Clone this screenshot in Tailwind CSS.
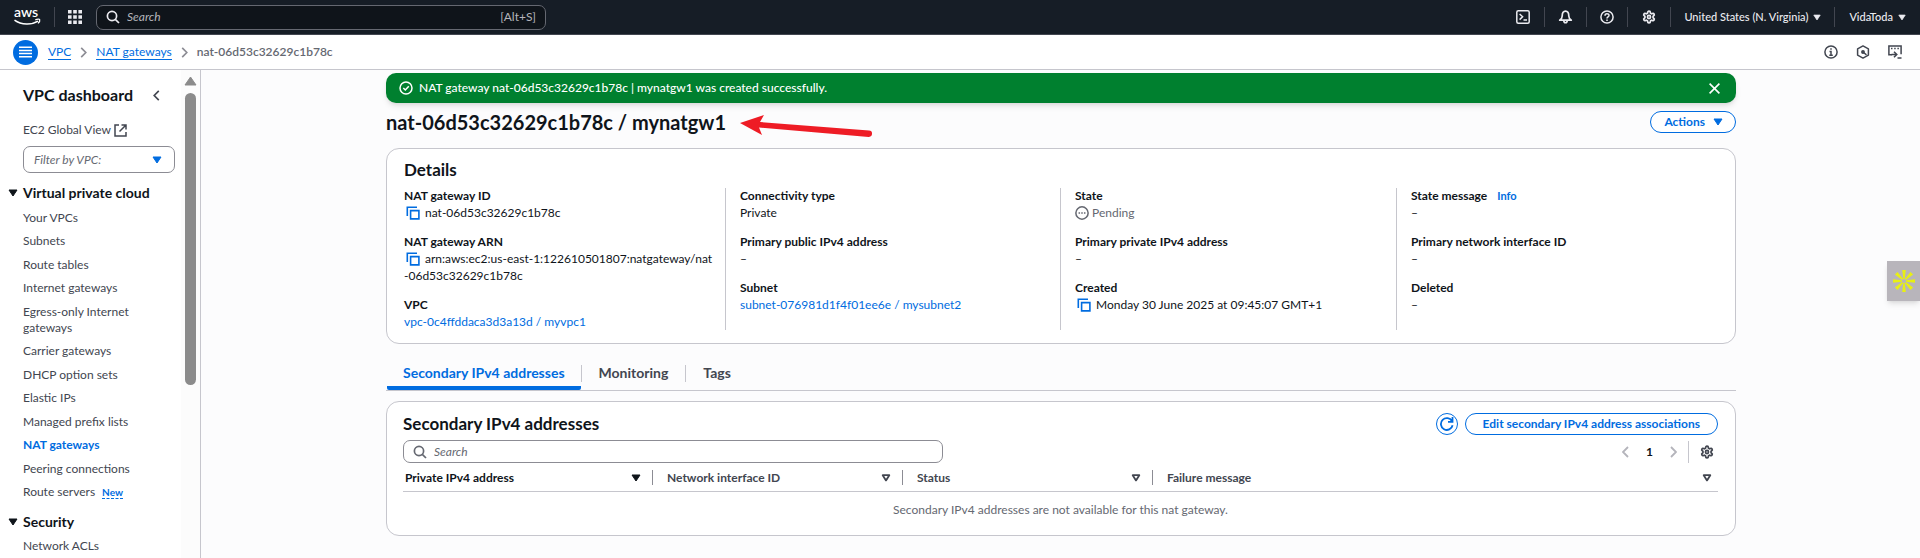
<!DOCTYPE html>
<html lang="en">
<head>
<meta charset="utf-8">
<meta name="viewport" content="width=device-width, initial-scale=1">
<title>NAT gateways | VPC Console</title>
<script src="https://cdn.jsdelivr.net/npm/@tailwindcss/browser@4"></script>
</head>
<body class="flex h-screen flex-col overflow-hidden bg-[#fcfcfd] font-['Lato','Noto_Sans',sans-serif] text-[12px] leading-4 text-[#0f141a]">

<svg class="hidden" aria-hidden="true">
  <symbol id="gear" viewBox="0 0 24 24"><g fill="none" stroke="currentColor" stroke-width="3"><path d="M12.22 2h-.44a2 2 0 0 0-2 2v.18a2 2 0 0 1-1 1.73l-.43.25a2 2 0 0 1-2 0l-.15-.08a2 2 0 0 0-2.73.73l-.22.38a2 2 0 0 0 .73 2.73l.15.1a2 2 0 0 1 1 1.72v.51a2 2 0 0 1-1 1.74l-.15.09a2 2 0 0 0-.73 2.73l.22.38a2 2 0 0 0 2.73.73l.15-.08a2 2 0 0 1 2 0l.43.25a2 2 0 0 1 1 1.73V20a2 2 0 0 0 2 2h.44a2 2 0 0 0 2-2v-.18a2 2 0 0 1 1-1.73l.43-.25a2 2 0 0 1 2 0l.15.08a2 2 0 0 0 2.73-.73l.22-.39a2 2 0 0 0-.73-2.73l-.15-.08a2 2 0 0 1-1-1.74v-.5a2 2 0 0 1 1-1.74l.15-.09a2 2 0 0 0 .73-2.73l-.22-.38a2 2 0 0 0-2.73-.73l-.15.08a2 2 0 0 1-2 0l-.43-.25a2 2 0 0 1-1-1.73V4a2 2 0 0 0-2-2z"/><circle cx="12" cy="12" r="2.6"/></g></symbol>
  <symbol id="search" viewBox="0 0 14 14"><g fill="none" stroke="currentColor" stroke-width="1.7"><circle cx="6" cy="6" r="4.6"/><path d="M9.3 9.3 13 13"/></g></symbol>
  <symbol id="caret" viewBox="0 0 10 8"><path fill="currentColor" stroke="currentColor" stroke-linejoin="round" d="M1 1h8L5 7z"/></symbol>
  <symbol id="caret-open" viewBox="0 0 10 8"><path fill="none" stroke="currentColor" stroke-width="1.8" stroke-linejoin="round" d="M1.7 1.2h6.6L5 6.4z"/></symbol>
  <symbol id="chevron-right" viewBox="0 0 7 12"><path fill="none" stroke="currentColor" stroke-width="1.8" d="m1 1 5 5-5 5"/></symbol>
  <symbol id="chevron-left" viewBox="0 0 7 12"><path fill="none" stroke="currentColor" stroke-width="1.8" d="M6 1 1 6l5 5"/></symbol>
  <symbol id="copy" viewBox="0 0 14 14"><path fill="none" stroke="currentColor" stroke-width="1.6" d="M1.3 10V1.3H11M4.600 4.600h8.300v8.300H4.600z"/></symbol>
</svg>

<header class="flex h-[35px] shrink-0 items-center border-b border-[#424650] bg-[#161d26] text-[#ebebf0]">
  <a href="#" aria-label="AWS home" class="ml-[13px] block">
    <svg class="h-[20px] w-[28px] overflow-visible" viewBox="0 0 28 20"><text x="13" y="10" text-anchor="middle" font-size="14" font-weight="600" fill="#fff">aws</text><path d="M1.500 13.200c7 5.200 17.500 4.800 23.500 1" fill="none" stroke="#fff" stroke-width="1.500"/><path d="M22.300 12.800c2-.8 4.200-.8 4.400-.2s-.5 2.600-1.700 3.800" fill="none" stroke="#fff" stroke-width="1.300"/></svg>
  </a>
  <span class="ml-[13px] h-[20px] w-px bg-[#424650]"></span>
  <button type="button" aria-label="Services" class="ml-[13px]">
    <svg class="size-[14px]" viewBox="0 0 14 14" fill="currentColor"><path d="M0 0h3.600v3.600H0zM5.200 0h3.600v3.600H5.200zM10.400 0H14v3.600h-3.600zM0 5.200h3.600v3.600H0zM5.200 5.200h3.600v3.600H5.200zM10.400 5.200H14v3.600h-3.600zM0 10.400h3.600V14H0zM5.200 10.400h3.600V14H5.200zM10.400 10.400H14V14h-3.600z"/></svg>
  </button>
  <label class="ml-[14px] flex h-[25px] w-[450px] items-center rounded-[7px] border border-[#656871] bg-[#0f141a] px-[9px]">
    <svg class="size-[14px] shrink-0"><use href="#search"/></svg>
    <input type="search" aria-label="Search" placeholder="Search" class="ml-[7px] min-w-0 flex-1 bg-transparent text-[12px] italic outline-none placeholder:text-[#b4b4bb]">
    <span class="text-[12px] text-[#b4b4bb]">[Alt+S]</span>
  </label>
  <div class="ml-auto flex items-center">
    <button type="button" aria-label="CloudShell" class="mr-[14px]"><svg class="size-[14px]" viewBox="0 0 14 14" fill="none" stroke="currentColor" stroke-width="1.500"><rect x=".8" y=".8" width="12.400" height="12.400" rx="1.500"/><path d="m3.600 4 3 2.800-3 2.800M7.500 10H11"/></svg></button>
    <span class="h-[20px] w-px bg-[#424650]"></span>
    <button type="button" aria-label="Notifications" class="mx-[13px]"><svg class="h-[14px] w-[15px]" viewBox="0 0 15 14" fill="none" stroke="currentColor" stroke-width="1.700"><path d="M4.200 6c0-3.200 1.300-4.900 3.300-4.900S10.800 2.800 10.800 6c0 2.200 1.200 3.300 2.500 4.200H1.700C3 9.300 4.200 8.200 4.200 6z" stroke-linejoin="round"/><path d="M5.800 10.500c0 3 3.400 3 3.400 0"/></svg></button>
    <span class="h-[20px] w-px bg-[#424650]"></span>
    <button type="button" aria-label="Help" class="mx-[13px]"><svg class="size-[14px]" viewBox="0 0 14 14" fill="none" stroke="currentColor" stroke-width="1.500"><circle cx="7" cy="7" r="6.100"/><path d="M5 5.700C5 3 9 3 9 5.500 9 7 7 6.900 7 8.600M7 9.500v1.500"/></svg></button>
    <span class="h-[20px] w-px bg-[#424650]"></span>
    <button type="button" aria-label="Settings" class="mx-[14px]"><svg class="size-[14px]"><use href="#gear"/></svg></button>
    <span class="h-[20px] w-px bg-[#424650]"></span>
    <button type="button" class="mx-[13px] flex items-center gap-[5px] text-[11px] font-medium">United States (N. Virginia)<svg class="h-[7px] w-[8px]"><use href="#caret"/></svg></button>
    <span class="h-[20px] w-px bg-[#424650]"></span>
    <button type="button" class="mr-[14px] ml-[14px] flex items-center gap-[5px] text-[11px] font-medium">VidaToda<svg class="h-[7px] w-[8px]"><use href="#caret"/></svg></button>
  </div>
</header>

<div class="flex h-[35px] shrink-0 items-center border-b border-[#c6c6cd] bg-white">
  <button type="button" aria-label="Open navigation" class="ml-[13px] flex size-[25px] items-center justify-center rounded-full bg-[#006ce0] text-white">
    <svg class="h-[12px] w-[13px]" viewBox="0 0 13 12" stroke="currentColor" stroke-width="1.500"><path d="M0 1.200h13M0 4.400h13M0 7.600h13M0 10.800h13"/></svg>
  </button>
  <nav aria-label="Breadcrumb" class="ml-[10px]">
    <ol class="flex items-center gap-[9px] text-[12px]">
      <li><a href="#" class="border-b border-[#006ce0] text-[#006ce0]">VPC</a></li>
      <li aria-hidden="true"><svg class="h-[11px] w-[7px] text-[#8c8c94]"><use href="#chevron-right"/></svg></li>
      <li><a href="#" class="border-b border-[#006ce0] text-[#006ce0]">NAT gateways</a></li>
      <li aria-hidden="true"><svg class="h-[11px] w-[7px] text-[#8c8c94]"><use href="#chevron-right"/></svg></li>
      <li class="font-semibold text-[#656871]" aria-current="page">nat-06d53c32629c1b78c</li>
    </ol>
  </nav>
  <div class="mr-[18px] ml-auto flex items-center gap-[18px] text-[#424650]">
    <button type="button" aria-label="Info"><svg class="size-[14px]" viewBox="0 0 14 14" fill="none" stroke="currentColor" stroke-width="1.500"><circle cx="7" cy="7" r="6.100"/><path d="M7 3.300v1.500M5.500 6.600H7v3.800M5.300 10.200h3.500"/></svg></button>
    <button type="button" aria-label="Diagnostics"><svg class="size-[14px]" viewBox="0 0 14 14" fill="none" stroke="currentColor" stroke-width="1.500"><path d="m7 .9 5.400 3v6.200L7 13.100l-5.400-3V3.900z" stroke-linejoin="round"/><circle cx="7" cy="7" r="1.200" fill="currentColor"/><path d="m7.500 7.500 3 2.300"/></svg></button>
    <button type="button" aria-label="Console actions"><svg class="size-[14px]" viewBox="0 0 14 14" fill="none" stroke="currentColor" stroke-width="1.500"><path d="M4 9.800H.9V1h12.200v8.300"/><path d="M3 3.600h1.500M6.200 3.600h1.500M9.400 3.600h1.500M3.500 9.500h5M6 6.700l2.800 2.800L6 12.300M9.500 13h4"/></svg></button>
  </div>
</div>

<div class="flex min-h-0 flex-1">
  <aside class="flex w-[201px] shrink-0 border-r border-[#c6c6cd] bg-white">
    <div class="flex min-w-0 flex-1 flex-col overflow-hidden text-[#424650]">
      <div class="mt-[13px] flex items-center justify-between pr-[21px] pl-[23px]">
        <h2 class="text-[16px] leading-6 font-bold text-[#0f141a]">VPC dashboard</h2>
        <button type="button" aria-label="Close navigation"><svg class="h-[11px] w-[7px]"><use href="#chevron-left"/></svg></button>
      </div>
      <a href="#" class="mt-[15px] ml-[23px] flex items-center gap-[3px]">EC2 Global View
        <svg class="size-[13px]" viewBox="0 0 13 13" fill="none" stroke="currentColor" stroke-width="1.500"><path d="M5 1H1v11h11V8M7.500 1H12v4.500M12 1 5.500 7.500"/></svg>
      </a>
      <button type="button" class="mt-2 mr-[6px] ml-[23px] flex h-[27px] shrink-0 items-center justify-between rounded-[7px] border border-[#8c8c94] pr-[12px] pl-[10px] text-[12px] text-[#656871] italic">Filter by VPC:
        <svg class="h-[8px] w-[10px] text-[#006ce0]"><use href="#caret"/></svg>
      </button>
      <h3 class="mt-[10px] ml-2 flex items-center gap-[5px] text-[14px] leading-5 font-bold text-[#0f141a]"><svg class="h-[8px] w-[10px] shrink-0"><use href="#caret"/></svg>Virtual private cloud</h3>
      <ul class="mt-[7px] ml-[23px] flex h-[290px] shrink-0 flex-col justify-between">
        <li><a href="#">Your VPCs</a></li>
        <li><a href="#">Subnets</a></li>
        <li><a href="#">Route tables</a></li>
        <li><a href="#">Internet gateways</a></li>
        <li><a href="#">Egress-only Internet<br>gateways</a></li>
        <li><a href="#">Carrier gateways</a></li>
        <li><a href="#">DHCP option sets</a></li>
        <li><a href="#">Elastic IPs</a></li>
        <li><a href="#">Managed prefix lists</a></li>
        <li><a href="#" aria-current="page" class="font-bold text-[#006ce0]">NAT gateways</a></li>
        <li><a href="#">Peering connections</a></li>
        <li><a href="#">Route servers</a><a href="#" class="ml-[7px] border-b border-dashed border-[#006ce0] text-[10px] font-bold text-[#006ce0]">New</a></li>
      </ul>
      <h3 class="mt-[12px] ml-2 flex items-center gap-[5px] text-[14px] leading-5 font-bold text-[#0f141a]"><svg class="h-[8px] w-[10px] shrink-0"><use href="#caret"/></svg>Security</h3>
      <ul class="mt-[6px] ml-[23px]"><li><a href="#">Network ACLs</a></li></ul>
    </div>
    <div class="flex w-[19px] flex-col items-center bg-[#fcfcfc] pt-[6px]" aria-hidden="true">
      <svg class="h-[10px] w-[13px] text-[#8b8b8b]" viewBox="0 0 13 10"><path d="M6.500 1 12 9H1z" fill="currentColor" stroke="currentColor" stroke-linejoin="round"/></svg>
      <div class="mt-[7px] h-[292px] w-[11px] rounded-full bg-[#8b8b8b]"></div>
    </div>
  </aside>

  <main class="relative min-w-0 flex-1 pr-[184px] pl-[185px]">
    <div role="status" class="mt-[3px] flex h-[30px] items-center rounded-[10px] bg-[#00802f] pr-[16px] pl-[13px] text-white shadow-md">
      <svg class="size-[14px]" viewBox="0 0 14 14" fill="none" stroke="currentColor" stroke-width="1.500"><circle cx="7" cy="7" r="6"/><path d="m4.300 7 2 2 3.500-3.700"/></svg>
      <p class="ml-[6px] font-medium">NAT gateway nat-06d53c32629c1b78c | mynatgw1 was created successfully.</p>
      <button type="button" aria-label="Dismiss" class="ml-auto"><svg class="size-[11px]" viewBox="0 0 11 11" stroke="currentColor" stroke-width="1.600"><path d="m.6.6 9.800 9.800M10.400.6.600 10.400"/></svg></button>
    </div>

    <div class="mt-2 flex h-[22px] items-center justify-between">
      <h1 class="text-[20px] leading-[22px] font-bold">nat-06d53c32629c1b78c / mynatgw1</h1>
      <button type="button" class="flex h-[22px] items-center gap-2 rounded-full border border-[#006ce0] bg-white pr-[12px] pl-[13px] font-bold text-[#006ce0]">Actions<svg class="h-[8px] w-[10px]"><use href="#caret"/></svg></button>
    </div>
    <svg class="absolute top-[43px] left-[538px] h-[26px] w-[134px] text-[#ee1c25]" viewBox="0 0 134 26" fill="currentColor" aria-hidden="true"><path d="M1 10 25 2l-4 7 109 8.500a3.200 3.200 0 0 1-.3 6.400L20 14.500l3 7.500z"/></svg>

    <section class="mt-[15px] rounded-[13px] border border-[#c6c6cd] bg-white px-[17px] pt-[9px] pb-[13px]">
      <h2 class="text-[17px] leading-6 font-bold">Details</h2>
      <div class="mt-[6px] grid grid-cols-[321fr_335fr_336fr_322fr] leading-[17px]">
        <dl class="flex flex-col gap-[13px]">
          <div><dt class="leading-4 font-bold">NAT gateway ID</dt><dd class="flex items-center"><button type="button" aria-label="Copy NAT gateway ID" class="mr-[5px] ml-[2px] text-[#006ce0]"><svg class="size-[14px]"><use href="#copy"/></svg></button>nat-06d53c32629c1b78c</dd></div>
          <div><dt class="leading-4 font-bold">NAT gateway ARN</dt><dd><div class="flex items-center"><button type="button" aria-label="Copy ARN" class="mr-[5px] ml-[2px] text-[#006ce0]"><svg class="size-[14px]"><use href="#copy"/></svg></button>arn:aws:ec2:us-east-1:122610501807:natgateway/nat</div>-06d53c32629c1b78c</dd></div>
          <div><dt class="leading-4 font-bold">VPC</dt><dd><a href="#" class="text-[#006ce0]">vpc-0c4ffddaca3d3a13d / myvpc1</a></dd></div>
        </dl>
        <dl class="flex flex-col gap-[13px] border-l border-[#c6c6cd] pl-[14px]">
          <div><dt class="leading-4 font-bold">Connectivity type</dt><dd>Private</dd></div>
          <div><dt class="leading-4 font-bold">Primary public IPv4 address</dt><dd>–</dd></div>
          <div><dt class="leading-4 font-bold">Subnet</dt><dd><a href="#" class="text-[#006ce0]">subnet-076981d1f4f01ee6e / mysubnet2</a></dd></div>
        </dl>
        <dl class="flex flex-col gap-[13px] border-l border-[#c6c6cd] pl-[14px]">
          <div><dt class="leading-4 font-bold">State</dt><dd class="flex items-center gap-[3px] text-[#656871]"><svg class="size-[14px]" viewBox="0 0 13 13" fill="none" stroke="currentColor" stroke-width="1.400"><circle cx="6.500" cy="6.500" r="5.700"/><path d="M3.300 6.500h1.400M5.800 6.500h1.400M8.300 6.500h1.400"/></svg>Pending</dd></div>
          <div><dt class="leading-4 font-bold">Primary private IPv4 address</dt><dd>–</dd></div>
          <div><dt class="leading-4 font-bold">Created</dt><dd class="flex items-center"><button type="button" aria-label="Copy created date" class="mr-[5px] ml-[2px] text-[#006ce0]"><svg class="size-[14px]"><use href="#copy"/></svg></button>Monday 30 June 2025 at 09:45:07 GMT+1</dd></div>
        </dl>
        <dl class="flex flex-col gap-[13px] border-l border-[#c6c6cd] pl-[14px]">
          <div><dt class="leading-4 font-bold">State message<a href="#" class="ml-[10px] text-[11px] text-[#006ce0]">Info</a></dt><dd>–</dd></div>
          <div><dt class="leading-4 font-bold">Primary network interface ID</dt><dd>–</dd></div>
          <div><dt class="leading-4 font-bold">Deleted</dt><dd>–</dd></div>
        </dl>
      </div>
    </section>

    <div role="tablist" class="mt-[19px] flex border-b border-[#c6c6cd] text-[14px] leading-5 font-bold text-[#424650]">
      <button type="button" role="tab" aria-selected="true" class="ml-px h-[27px] rounded-b-[2px] border-b-4 border-[#006ce0] px-[16px] pb-[3px] text-[#006ce0]">Secondary IPv4 addresses</button>
      <span class="mt-[2px] h-[17px] w-px bg-[#c6c6cd]"></span>
      <button type="button" role="tab" aria-selected="false" class="h-[27px] px-[17px] pb-[7px]">Monitoring</button>
      <span class="mt-[2px] h-[17px] w-px bg-[#c6c6cd]"></span>
      <button type="button" role="tab" aria-selected="false" class="h-[27px] px-[17px] pb-[7px]">Tags</button>
    </div>

    <section class="mt-[10px] rounded-[13px] border border-[#c6c6cd] bg-white pt-[11px] pr-[17px] pb-[7px] pl-[16px]">
      <div class="flex items-center gap-[7px]">
        <h2 class="mr-auto text-[17px] leading-[22px] font-bold">Secondary IPv4 addresses</h2>
        <button type="button" aria-label="Refresh" class="flex size-[22px] items-center justify-center rounded-full border border-[#006ce0] text-[#006ce0]"><svg class="size-[14px]" viewBox="0 0 14 14" fill="none" stroke="currentColor" stroke-width="1.800"><path d="M12.600 8.300A5.900 5.900 0 1 1 12 4.200M12.500 0v4.900H8"/></svg></button>
        <button type="button" class="flex h-[22px] items-center rounded-full border border-[#006ce0] px-[17px] font-bold text-[#006ce0]">Edit secondary IPv4 address associations</button>
      </div>
      <div class="mt-[5px] flex items-center">
        <label class="flex h-[23px] w-[540px] items-center rounded-[7px] border border-[#8c8c94] px-[9px] text-[#656871]">
          <svg class="size-[14px] shrink-0"><use href="#search"/></svg>
          <input type="search" aria-label="Search secondary addresses" placeholder="Search" class="ml-[7px] min-w-0 flex-1 bg-transparent italic outline-none placeholder:text-[#656871]">
        </label>
        <div class="ml-auto flex items-center">
          <button type="button" aria-label="Previous page"><svg class="h-[12px] w-[7px] text-[#b4b4bb]"><use href="#chevron-left"/></svg></button>
          <button type="button" class="mx-[17px] font-bold" aria-current="page">1</button>
          <button type="button" aria-label="Next page"><svg class="h-[12px] w-[7px] text-[#b4b4bb]"><use href="#chevron-right"/></svg></button>
          <span class="ml-[11px] h-[22px] w-px bg-[#c6c6cd]"></span>
          <button type="button" aria-label="Preferences" class="mr-[4px] ml-[11px] text-[#424650]"><svg class="size-[14px]"><use href="#gear"/></svg></button>
        </div>
      </div>
      <table class="w-full table-fixed border-collapse">
        <colgroup><col class="w-[250px]"><col class="w-[250px]"><col class="w-[250px]"><col></colgroup>
        <thead>
          <tr class="h-[28px] border-b border-[#c6c6cd] text-[#424650]">
            <th scope="col" class="p-0 pt-[2px]"><button type="button" class="flex h-[15px] w-full items-center justify-between border-r border-[#8c8c94] pr-[11px] pl-[2px] text-[#0f141a]">Private IPv4 address<svg class="h-[8px] w-[10px]"><use href="#caret"/></svg></button></th>
            <th scope="col" class="p-0 pt-[2px]"><button type="button" class="flex h-[15px] w-full items-center justify-between border-r border-[#8c8c94] pr-[11px] pl-[14px]">Network interface ID<svg class="h-[8px] w-[10px]"><use href="#caret-open"/></svg></button></th>
            <th scope="col" class="p-0 pt-[2px]"><button type="button" class="flex h-[15px] w-full items-center justify-between border-r border-[#8c8c94] pr-[11px] pl-[14px]">Status<svg class="h-[8px] w-[10px]"><use href="#caret-open"/></svg></button></th>
            <th scope="col" class="p-0 pt-[2px]"><button type="button" class="flex h-[15px] w-full items-center justify-between pr-[6px] pl-[14px]">Failure message<svg class="h-[8px] w-[10px]"><use href="#caret-open"/></svg></button></th>
          </tr>
        </thead>
        <tbody><tr class="h-[37px]"><td colspan="4" class="p-0 text-center text-[#656871]">Secondary IPv4 addresses are not available for this nat gateway.</td></tr></tbody>
      </table>
    </section>

    <button type="button" aria-label="Open assistant" class="absolute top-[191px] right-0 flex h-[40px] w-[33px] items-center justify-center bg-[#b8b5bb] shadow-md">
      <svg class="size-[22px]" viewBox="-11 -11 22 22" fill="#e8f013"><g id="ray"><path d="M-1.800-11h3.600L.7-2h-1.400z"/><path d="M-1.800-11h3.600L.7-2h-1.400z" transform="rotate(45)"/><path d="M-1.800-11h3.600L.7-2h-1.400z" transform="rotate(90)"/><path d="M-1.800-11h3.600L.7-2h-1.400z" transform="rotate(135)"/></g><use href="#ray" transform="rotate(180)"/></svg>
    </button>
  </main>
</div>
</body>
</html>
